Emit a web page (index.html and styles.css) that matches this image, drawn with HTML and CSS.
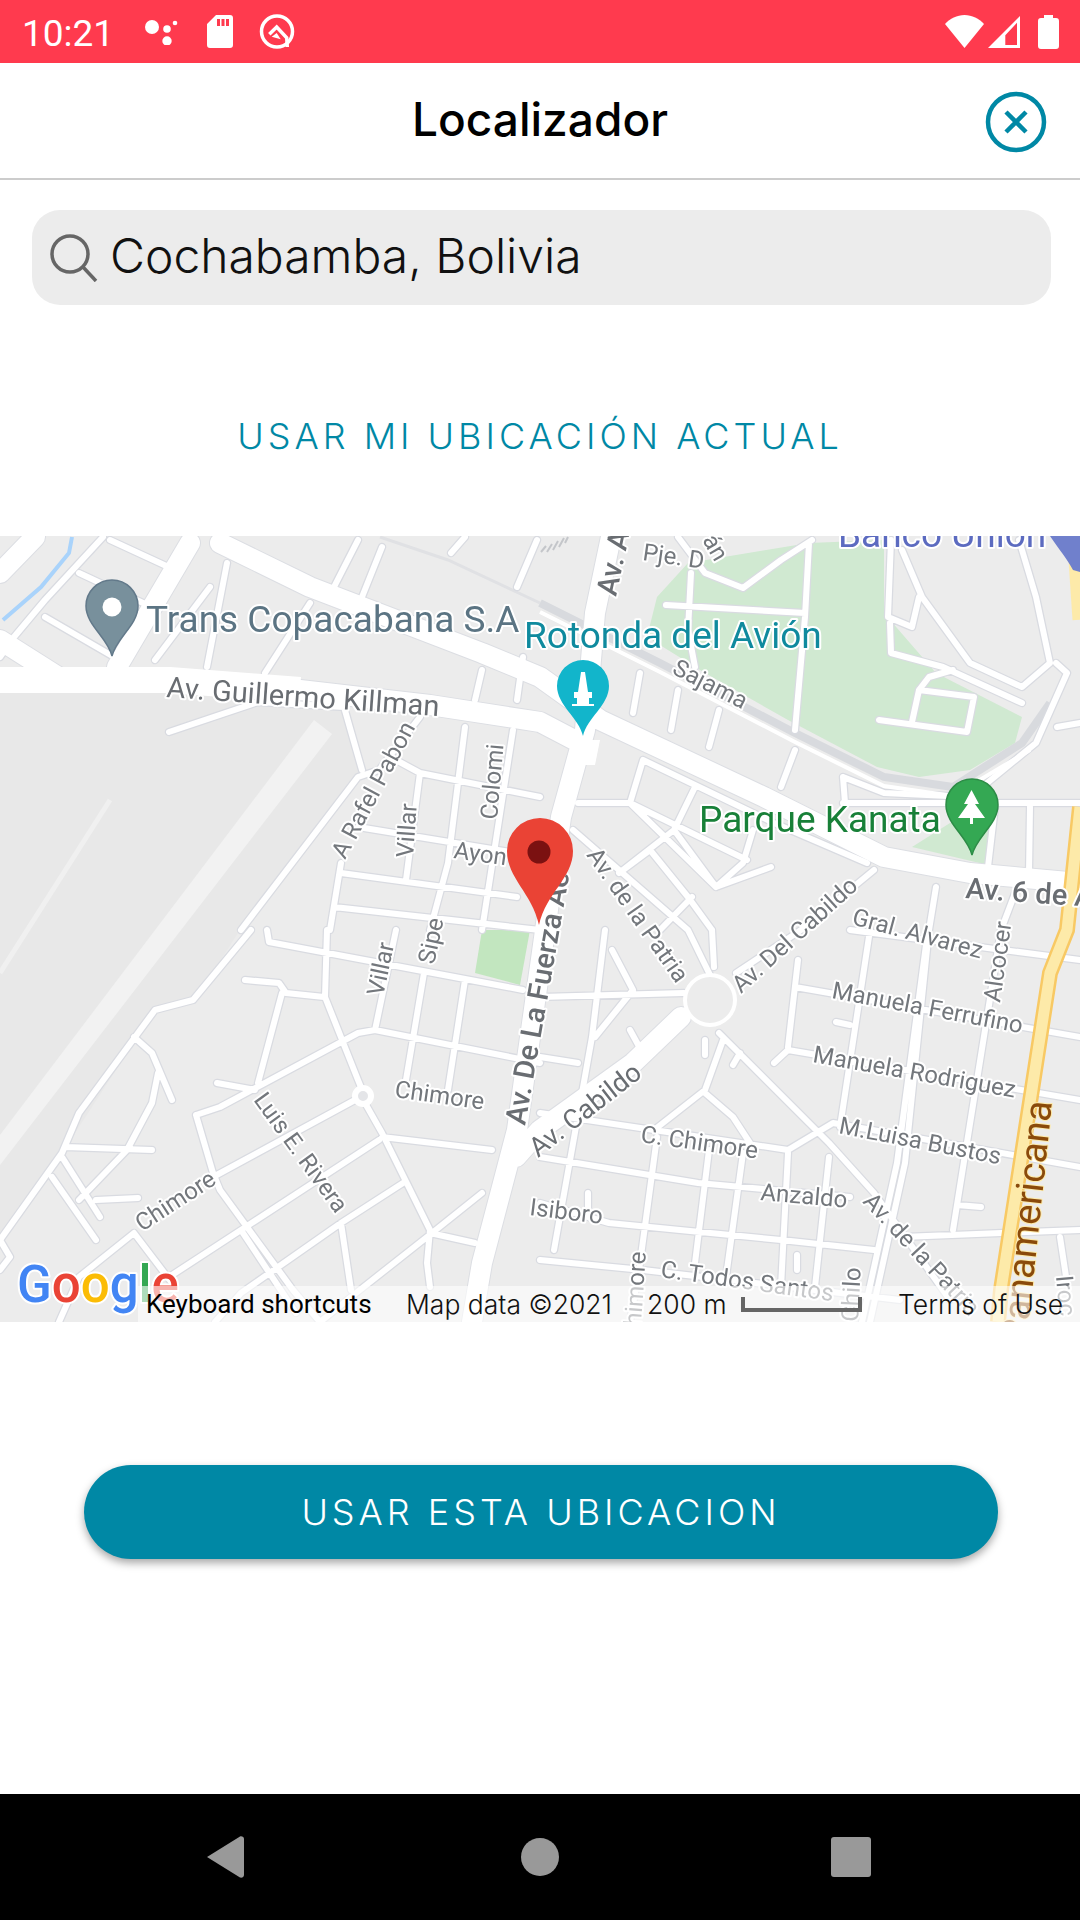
FILE: index.html
```html
<!DOCTYPE html>
<html lang="es">
<head>
    <meta charset="UTF-8">
    <meta name="viewport" content="width=device-width, initial-scale=1.0">
    <title>Localizador</title>
    <link rel="stylesheet" href="styles.css">
</head>
<body>
    <div class="phone">
        <!-- Status bar -->
        <div class="status-bar">
            <span class="clock">10:21</span>
            <svg class="status-icon dots" viewBox="0 0 33 27"><circle cx="7" cy="9" r="7"/><circle cx="22" cy="11" r="3.800"/><circle cx="30" cy="5" r="2.300"/><circle cx="22" cy="23" r="4.700"/></svg>
            <svg class="status-icon sd" viewBox="0 0 26 33"><path fill-rule="evenodd" d="M9 0H23a3 3 0 0 1 3 3V30a3 3 0 0 1-3 3H3a3 3 0 0 1-3-3V9ZM10 4V11H13V4ZM14.500 4V11H17.500V4ZM19 4V11H22V4Z"/></svg>
            <svg class="status-icon vpn" viewBox="0 0 37 36"><circle cx="18" cy="17.500" r="15.500" fill="none" stroke="#fff" stroke-width="3.500"/><path d="M10.300 20.300 17.700 13 27.700 23.700 28.300 33" fill="none" stroke="#fff" stroke-width="3.500"/><path d="M12.700 22.700 17.700 19 21.700 25.300Z"/></svg>
            <span class="status-gap"></span>
            <svg class="status-icon wifi" viewBox="0 0 39 33"><path d="M19.500 33 0 9C5 3.500 12 0 19.500 0S34 3.500 39 9Z"/></svg>
            <svg class="status-icon signal" viewBox="0 0 32 32"><path fill-rule="evenodd" d="M0 32 32 0V32ZM29 6.700V29H17.300V19.300Z"/></svg>
            <svg class="status-icon battery" viewBox="0 0 21 34"><path d="M6 0H15V3H18A3 3 0 0 1 21 6V31A3 3 0 0 1 18 34H3A3 3 0 0 1 0 31V6A3 3 0 0 1 3 3H6Z"/></svg>
        </div>

        <!-- Title -->
        <header class="top-bar">
            <h1 class="title">Localizador</h1>
            <svg class="close-icon" viewBox="0 0 62 62"><circle cx="31" cy="31" r="28" fill="none" stroke="#0088a5" stroke-width="4.500"/><path d="M21 21 41 41M41 21 21 41" stroke="#0088a5" stroke-width="4.500" fill="none"/></svg>
        </header>

        <div class="search-box">
            <svg class="search-icon" viewBox="0 0 48 48"><circle cx="20" cy="20" r="18" fill="none" stroke="#666" stroke-width="3.500"/><path d="M33 33 46 47" stroke="#666" stroke-width="3.500" fill="none"/></svg>
            <span class="search-text">Cochabamba, Bolivia</span>
        </div>

        <a class="current-link">USAR MI UBICACIÓN ACTUAL</a>

        <!-- Map -->
        <div class="map">
            <svg class="map-canvas" viewBox="0 536 1080 786">
                <defs>
                    <path id="minor" d="M103 537 45 600 14 637 0 657M110 540 175 570M79 573 158 610M45 617 114 657M227 563 207 667M210 587 155 660M310 603 265 673M358 540 334 587M382 547 362 597M482 670 475 700M523 657 517 700M517 587 537 540M451 553 465 537M169 732 258 702 344 707 362 770M420 717 379 770 358 777 241 930M251 930 193 1000 155 1010 79 1113 62 1153 0 1240 10 1257 0 1270M396 760 420 773 540 797M420 773 406 880M465 727 448 863 430 930M513 730 482 930M358 827 517 853M341 873 517 897M334 907 540 930M341 863 330 930M267 930 269 942 523 990M245 980 279 983 286 993 324 997M327 930 325 997 358 1080 365 1097M282 993 258 1083M217 1083 255 1090M196 1115 220 1107 358 1033 375 1030 540 1063M396 930 375 1030M424 973 406 1080M465 980 448 1090M196 1115 213 1173 220 1190 293 1290 320 1322M213 1177 355 1100M365 1103 382 1133 430 1230 427 1263 430 1287M382 1137 492 1150M379 1140 241 1230 169 1277M403 1183 341 1223 241 1293 215 1322M241 1230 296 1313M341 1223 351 1290M482 1193 427 1237 351 1297 320 1322M430 1233 475 1243M134 1233 79 1277 59 1322M134 1233 172 1283M134 1037 152 1053 172 1100M158 1073 152 1103 127 1150 79 1200M65 1147 152 1150M62 1157 100 1217M52 1177 96 1240M96 1200 138 1198M640 673 633 713M678 690 671 730M719 710 709 747M795 750 781 787M843 777 845 803M809 543 805 617 795 730M666 605 805 613M691 573 688 630 695 667M678 537 705 573 743 588 781 560 812 540M891 540 888 617 912 627 919 597M902 550 922 597 970 663 1022 687 1050 663 1036 597 1019 540M890 623 891 653 943 667 1022 703M879 720 967 732 974 697 919 690 912 722M919 690 929 677 953 670M1056 663 1067 673 1036 743 970 797 884 793 843 777M843 803 1080 803M995 807 988 867M1030 807 1029 873M1057 727 1080 723M578 803 630 803 747 860M643 760 630 803 716 887 771 867M695 787 674 830 619 873M674 830 716 887M619 873 650 850 688 897 712 930M692 897 660 930M643 760 774 823 867 863M753 830 743 863 716 887M573 830 688 930 710 975M874 870 801 930 736 973M936 887 929 930 905 1163 870 1322M928 930 897 1163 862 1322M870 930 840 1127M1001 930 953 1230M1020 880 1001 930M798 960 788 1047M795 987 1080 1037M774 1063 788 1050 1080 1100M540 1113 788 1150 833 1123 1080 1167M719 1033 829 1143 874 1193M612 950 633 990 595 1037M605 930 592 1037 554 1250M540 997 684 993M540 1057 578 1063M723 1040 705 1090 654 1130M705 1093 733 1117 750 1143M540 1157 698 1183 850 1197M657 1137 640 1263 630 1322M709 1150 695 1263M743 1153 726 1277M788 1153 781 1287M829 1157 815 1287M540 1203 609 1223 781 1240 874 1250M540 1260 643 1270 815 1290 900 1300M902 1237 1080 1230M1060 1237 1067 1283M850 930 1080 960M874 1193 950 1300M712 930 714 967M630 1030 641 1050M836 1022 850 1025M957 1205 981 1207M588 1193 588 1213M705 1040 705 1055M740 1053 733 1065M797 1255 797 1270"/>
                    <path id="major" d="M0 573 35 537M0 640 60 678M190 543 117 667M0 680 160 680 300 690 430 705 540 722 584 745M220 543 310 587 482 653 540 677 600 720 764 797 884 857 970 873 1080 883M611 537 595 613 585 730 561 817 517 1130 482 1263 472 1322M681 1017 633 1063 540 1130 516 1157"/>
                </defs>

                <rect class="map-bg" x="0" y="536" width="1080" height="786"/>
                <path class="airport" d="M0 693H170L340 707 360 775 240 930 195 1000 155 1010 62 1153 0 1240Z"/>
                <path class="strip" d="M314 720 332 734 0 1165V1135Z"/>
                <path class="strip-thin" d="M110 800 0 973"/>
                <path class="park" d="M688 563 809 543 884 540 884 613 936 673 1022 717 1015 743 970 770 919 777 877 767 788 720 705 673 647 637 657 597Z"/>
                <path class="park" d="M912 847 950 823 991 823 988 865Z"/>
                <path class="park-small" d="M482 930 530 930 520 985 475 973Z"/>
                <path class="river" d="M72 537 69 553 41 587 3 620"/>
                <path class="rail-thin" d="M380 537 448 560 540 603"/>
                <path class="rail" d="M540 603 660 663 795 733 884 777 953 787 1022 743 1050 703"/>

                <use href="#minor" class="casing-minor"/>
                <use href="#major" class="casing-major"/>
                <use href="#minor" class="road-minor"/>
                <use href="#major" class="road-major"/>
                <path class="road-wide" d="M0 680H170L300 690"/>
                <path class="rail-road" d="M540 612 660 672 795 742 884 786 953 796 1030 750"/>
                <circle class="round-island" cx="710" cy="1000" r="25"/>
                <circle class="round-small" cx="363" cy="1096" r="8"/>
                <path class="round-center" d="M570 740 600 740 595 765 574 765Z"/>
                <path class="hatch" d="M541 552 546 546M547 552 552 544M553 550 558 541M559 547 564 538M565 543 568 537"/>

                <path class="highway-edge" d="M1080 807 1067 930 1050 973 1001 1290 998 1322"/>
                <path class="highway" d="M1080 807 1067 930 1050 973 1001 1290 998 1322"/>
                <path class="highway" d="M1074 560 1078 620"/>

                <!-- Street names -->
                <text class="street big" transform="translate(166 697) rotate(4)">Av. Guillermo Killman</text>
                <text class="street" transform="translate(345 860) rotate(-62)">A Rafel Pabon</text>
                <text class="street" transform="translate(413 858) rotate(-86)">Villar</text>
                <text class="street" transform="translate(497 820) rotate(-85)">Colomi</text>
                <text class="street" transform="translate(453 858) rotate(8)">Ayon</text>
                <text class="street" transform="translate(434 965) rotate(-78)">Sipe</text>
                <text class="street" transform="translate(383 997) rotate(-78)">Villar</text>
                <text class="street" transform="translate(394 1097) rotate(8)">Chimore</text>
                <text class="street big strong" transform="translate(525 1126) rotate(-80)">Av. De La Fuerza Ae</text>
                <text class="street" transform="translate(253 1100) rotate(54)">Luis E. Rivera</text>
                <text class="street" transform="translate(142 1232) rotate(-33)">Chimore</text>
                <text class="street mid" transform="translate(538 1158) rotate(-38)">Av. Cabildo</text>
                <text class="street" transform="translate(640 1142) rotate(8)">C. Chimore</text>
                <text class="street" transform="translate(760 1200) rotate(5)">Anzaldo</text>
                <text class="street" transform="translate(529 1215) rotate(7)">Isiboro</text>
                <text class="street" transform="translate(831 998) rotate(10.500)">Manuela Ferrufino</text>
                <text class="street" transform="translate(812 1062) rotate(10)">Manuela Rodriguez</text>
                <text class="street" transform="translate(838 1133) rotate(11)">M.Luisa Bustos</text>
                <text class="street" transform="translate(862 1202) rotate(47)">Av. de la Patria</text>
                <text class="street" transform="translate(851 924) rotate(15)">Gral. Alvarez</text>
                <text class="street" transform="translate(1000 1003) rotate(-82)">Alcocer</text>
                <text class="street" transform="translate(741 994) rotate(-42)">Av. Del Cabildo</text>
                <text class="street" transform="translate(586 855) rotate(55)">Av. de la Patria</text>
                <text class="street" transform="translate(671 673) rotate(27)">Sajama</text>
                <text class="street" transform="translate(642 560) rotate(8)">Pje. D</text>
                <text class="street big strong" transform="translate(616 597) rotate(-78)">Av. A</text>
                <text class="street big strong" transform="translate(965 898) rotate(4)">Av. 6 de A</text>
                <text class="street" transform="translate(702 540) rotate(60)">án</text>
                <text class="street" transform="translate(1056 1276) rotate(85)">Iroc</text>
                <text class="street" transform="translate(858 1322) rotate(-87)">Chilo</text>
                <text class="street" text-anchor="end" transform="translate(646 1252) rotate(-86)">Chimore</text>
                <text class="street" transform="translate(660 1277) rotate(8)">C. Todos Santos</text>
                <text class="highway-name" text-anchor="end" transform="translate(1052 1102) rotate(-84)">Panamericana</text>

                <!-- Place names -->
                <text class="place place-grey" x="146" y="632">Trans Copacabana S.A</text>
                <text class="place place-teal" x="524" y="648">Rotonda del Avión</text>
                <text class="place place-green" x="699" y="832">Parque Kanata</text>
                <text class="place place-blue" x="838" y="547">Banco Union</text>

                <!-- Pins -->
                <path class="pin pin-grey" transform="translate(112 580)" d="M0 76C-4 58-26 45-26 26A26 26 0 1 1 26 26C26 45 4 58 0 76Z"/>
                <circle class="pin-hole" cx="112" cy="607" r="9.500"/>
                <path class="pin pin-teal" transform="translate(583 660)" d="M0 76C-4 58-26 45-26 26A26 26 0 1 1 26 26C26 45 4 58 0 76Z"/>
                <path class="pin-mark" d="M581 672H585L588 692H592V698H589V704H594V706H572V704H577V698H574V692H578Z"/>
                <path class="pin pin-green" transform="translate(972 779)" d="M0 76C-4 58-26 45-26 26A26 26 0 1 1 26 26C26 45 4 58 0 76Z"/>
                <path class="pin-mark" d="M971.500 790 979 804H975L985 818H973V824H970V818H958L968 804H964Z"/>
                <path class="pin pin-blue" d="M1050 536H1080V572L1073 570C1068 560 1058 548 1050 536Z"/>
                <path class="pin-red" d="M539 925C532 893 507 878 507 851A33 33 0 1 1 573 851C573 878 546 893 539 925Z"/>
                <circle class="pin-dot" cx="539" cy="852" r="11.500"/>

                <text class="google-logo" x="17" y="1302"><tspan fill="#4285f4">G</tspan><tspan fill="#ea4335">o</tspan><tspan fill="#fbbc05">o</tspan><tspan fill="#4285f4">g</tspan><tspan fill="#34a853">l</tspan><tspan fill="#ea4335">e</tspan></text>
            </svg>

            <!-- Attribution over the map -->
            <div class="attribution">
                <span class="shortcuts">Keyboard shortcuts</span>
                <span class="map-data">Map data ©2021</span>
                <span class="scale-text">200 m</span>
                <span class="scale-bar"></span>
                <span class="terms">Terms of Use</span>
            </div>
        </div>

        <div class="button-row">
            <button class="use-button">USAR ESTA UBICACION</button>
        </div>

        <!-- Navigation bar -->
        <nav class="nav-bar">
            <svg class="nav-back" viewBox="0 0 37 42"><path d="M0 21 33 0.500C35 0 37 1 37 3V39C37 41 35 42 33 41.500Z" fill="#999"/></svg>
            <span class="nav-home"></span>
            <span class="nav-recent"></span>
        </nav>
    </div>
</body>
</html>
```

FILE: styles.css
```css
/* Page */
body {
    margin: 0;
    background: #fff;
    font-family: "Inter", "Liberation Sans", sans-serif;
}

.phone {
    width: 1080px;
    height: 1920px;
    display: flex;
    flex-direction: column;
    overflow: hidden;
}

/* Status bar */
.status-bar {
    height: 63px;
    background: #ff3a4e;
    display: flex;
    align-items: center;
    padding: 0 21px 0 22px;
    box-sizing: border-box;
}

.clock {
    font-family: "Roboto", sans-serif;
    font-size: 37px;
    color: #fff;
    width: 123px;
    margin-top: 3px;
}

.status-icon {
    fill: #fff;
    flex: none;
}

.dots { width: 33px; height: 27px; margin-right: 29px; }
.sd { width: 26px; height: 33px; margin-right: 26px; }
.vpn { width: 37px; height: 36px; }
.status-gap { flex: 1; }
.wifi { width: 39px; height: 33px; margin-right: 4px; }
.signal { width: 32px; height: 32px; margin-right: 18px; }
.battery { width: 21px; height: 34px; }

/* Title row */
.top-bar {
    height: 115px;
    border-bottom: 2px solid #ccc;
    display: flex;
    align-items: center;
    justify-content: center;
    position: relative;
}

.title {
    margin: 0 0 4px;
    font-size: 46px;
    font-weight: 500;
    color: #000;
}

.close-icon {
    position: absolute;
    right: 33px;
    top: 28px;
    width: 62px;
    height: 62px;
}

/* Search */
.search-box {
    height: 95px;
    margin: 30px 29px 0 32px;
    background: #ececec;
    border-radius: 28px;
    display: flex;
    align-items: center;
    padding-left: 18px;
}

.search-icon {
    width: 48px;
    height: 48px;
    margin-right: 12px;
}

.search-text {
    font-size: 48px;
    font-weight: 300;
    color: #111;
    margin-bottom: 4px;
}

.current-link {
    height: 231px;
    box-sizing: border-box;
    padding-top: 30px;
    display: flex;
    align-items: center;
    justify-content: center;
    font-size: 36px;
    font-weight: 300;
    letter-spacing: 4px;
    color: #0088a5;
}

/* Map */
.map {
    height: 786px;
    position: relative;
    overflow: hidden;
}

.map-canvas {
    display: block;
    width: 1080px;
    height: 786px;
    filter: blur(0.5px);
}

.map-bg { fill: #ececec; }
.airport { fill: #e8e8e8; }
.strip { fill: #f2f2f2; }
.strip-thin { stroke: #f0f0f0; stroke-width: 5px; fill: none; }
.park { fill: #d0e9d1; }
.park-small { fill: #c2e6bf; }
.river { stroke: #a9d3fb; stroke-width: 4px; fill: none; }
.rail { stroke: #d8dade; stroke-width: 8px; fill: none; }
.rail-thin { stroke: #e0e1e4; stroke-width: 3px; fill: none; }
.hatch { stroke: #c4c6ca; stroke-width: 2px; fill: none; }

.casing-minor, .road-minor, .casing-major, .road-major {
    fill: none;
    stroke-linejoin: round;
    stroke-linecap: round;
}

.casing-minor { stroke: #d9dbe1; stroke-width: 8.5px; }
.road-minor { stroke: #fff; stroke-width: 6px; }
.casing-major { stroke: #dcdee3; stroke-width: 22px; }
.road-major { stroke: #fff; stroke-width: 20px; }
.road-wide { stroke: #fff; stroke-width: 26px; fill: none; }
.rail-road { stroke: #fff; stroke-width: 4px; fill: none; }
.round-island { fill: #ececec; stroke: #fff; stroke-width: 4px; }
.round-small { fill: #e4e5e8; stroke: #fff; stroke-width: 6px; }
.round-center { fill: #fff; }

.highway { stroke: #fdeaa9; stroke-width: 11px; fill: none; }
.highway-edge { stroke: #f8c964; stroke-width: 16px; fill: none; }

/* Map labels */
.street, .place, .highway-name, .google-logo {
    paint-order: stroke;
    stroke: #fff;
    stroke-width: 4px;
    stroke-linejoin: round;
    font-family: "Roboto", sans-serif;
}

.street { font-size: 24px; fill: #73777c; }
.street.mid { font-size: 27px; fill: #696d72; }
.street.big { font-size: 29px; fill: #696d72; }
.street.strong { font-weight: 500; }
.highway-name { font-size: 38px; fill: #8a4a0b; stroke: #fdeaa9; stroke-width: 2px; }

.place { font-size: 37px; }
.place-grey { fill: #5b7483; }
.place-teal { fill: #0f8a9e; }
.place-green { fill: #188038; }
.place-blue { fill: #5c6bc0; }

.pin-grey { fill: #78909c; stroke: #62798a; stroke-width: 1.5px; }
.pin-teal { fill: #12b5cb; }
.pin-green { fill: #34a853; stroke: #2c8c46; stroke-width: 1.5px; }
.pin-blue { fill: #7080cc; }
.pin-hole, .pin-mark { fill: #fff; }
.pin-red { fill: #ea4335; }
.pin-dot { fill: #7b1111; }

.google-logo { font-size: 51px; font-weight: 500; }

.attribution {
    position: absolute;
    left: 138px;
    right: 0;
    bottom: 0;
    height: 36px;
    background: rgba(255, 255, 255, 0.6);
    display: flex;
    align-items: center;
    padding-left: 8px;
    color: #111;
    font-size: 26.5px;
    font-weight: 300;
    white-space: nowrap;
}

.shortcuts {
    font-family: "Roboto", sans-serif;
    font-size: 26px;
    font-weight: 400;
    width: 260px;
    color: #000;
}

.map-data { width: 241px; }
.scale-text { width: 94px; }

.scale-bar {
    width: 113px;
    height: 11px;
    border: 4px solid #666;
    border-top: none;
    margin-right: 36px;
}

/* Button */
.button-row {
    height: 472px;
    box-sizing: border-box;
    padding: 143px 82px 0 84px;
}

.use-button {
    width: 100%;
    height: 94px;
    border: none;
    border-radius: 47px;
    background: #0088a5;
    color: #fff;
    font-family: inherit;
    font-size: 36px;
    font-weight: 300;
    letter-spacing: 4px;
    box-shadow: 0 4px 8px rgba(0, 0, 0, 0.35);
}

/* Navigation bar */
.nav-bar {
    height: 126px;
    background: #000;
    position: relative;
    display: flex;
    align-items: center;
}

.nav-back { width: 37px; height: 42px; margin-left: 207px; }
.nav-home {
    width: 38px;
    height: 38px;
    border-radius: 50%;
    background: #999;
    margin-left: 277px;
}
.nav-recent {
    width: 40px;
    height: 40px;
    border-radius: 3px;
    background: #999;
    margin-left: 272px;
}
```
